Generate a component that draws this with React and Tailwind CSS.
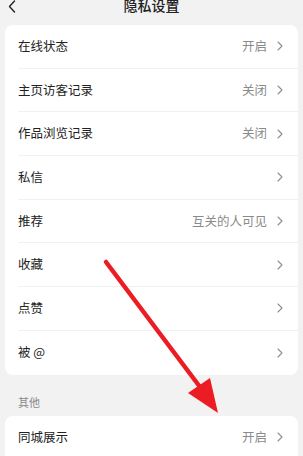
import React from "react";

const rows = [
  { label: "在线状态", value: "开启" },
  { label: "主页访客记录", value: "关闭" },
  { label: "作品浏览记录", value: "关闭" },
  { label: "私信", value: "" },
  { label: "推荐", value: "互关的人可见" },
  { label: "收藏", value: "" },
  { label: "点赞", value: "" },
  { label: "被 @", value: "" },
];

const Chevron = () => (
  <svg width="6" height="10" viewBox="0 0 6 10" fill="none" className="shrink-0">
    <path d="M1 1l4 4-4 4" stroke="#8f8f8f" strokeWidth="1.1" strokeLinecap="round" strokeLinejoin="round" />
  </svg>
);

const Row = ({ label, value, last }) => (
  <div className="flex h-[43.7px] pl-[13px]">
    <div
      className={
        "flex flex-1 items-center justify-between pr-[15px] " +
        (last ? "" : "border-b border-[#f1f1f1]")
      }
    >
      <span className="text-[12.5px] text-[#222]">{label}</span>
      <div className="flex items-center gap-[10px]">
        {value && <span className="text-[12.5px] text-[#8a8a8a]">{value}</span>}
        <Chevron />
      </div>
    </div>
  </div>
);

export default function App() {
  return (
    <div
      className="relative h-[456px] w-[303px] overflow-hidden bg-[#f2f2f2]"
      style={{ fontFamily: '"Noto Sans CJK SC", "Noto Sans", sans-serif' }}
    >
      {/* 顶部标题栏 */}
      <div className="flex h-[25px] items-start">
        <div className="-mt-[6px] flex h-[22px] w-full items-center px-[8px]">
          <svg width="8" height="13" viewBox="0 0 8 13" fill="none" className="mt-[3px]">
            <path d="M6.5 1L1.5 6.5l5 5.5" stroke="#222" strokeWidth="1.4" strokeLinecap="round" strokeLinejoin="round" />
          </svg>
          <div className="flex-1 pr-[8px] text-center text-[14px] font-medium text-[#222]">隐私设置</div>
        </div>
      </div>

      <div className="mx-[5px] overflow-hidden rounded-[8px] bg-white">
        {rows.map((r, i) => (
          <Row key={r.label} {...r} last={i === rows.length - 1} />
        ))}
      </div>

      <div className="flex h-[41px] items-center pl-[18px] pt-[14px] text-[11px] text-[#888]">其他</div>

      <div className="mx-[5px] overflow-hidden rounded-t-[8px] bg-white">
        <Row label="同城展示" value="开启" last />
      </div>

      {/* 红色箭头标注 */}
      <svg className="pointer-events-none absolute left-0 top-0" width="303" height="456" viewBox="0 0 303 456">
        <line x1="106" y1="262" x2="200" y2="387" stroke="#ec1c24" strokeWidth="4.5" strokeLinecap="round" />
        <polygon points="188,393 210,378 218,413" fill="#ec1c24" />
      </svg>
    </div>
  );
}
